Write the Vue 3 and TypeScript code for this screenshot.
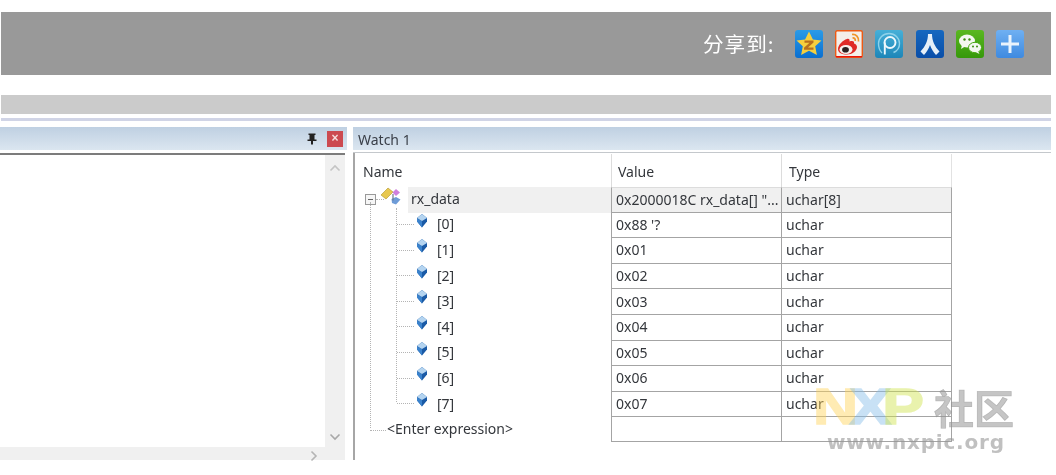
<script setup lang="ts">
interface Row { name: string; value: string; type: string }
const rows: Row[] = [
  { name: '[0]', value: "0x88 '?", type: 'uchar' },
  { name: '[1]', value: '0x01', type: 'uchar' },
  { name: '[2]', value: '0x02', type: 'uchar' },
  { name: '[3]', value: '0x03', type: 'uchar' },
  { name: '[4]', value: '0x04', type: 'uchar' },
  { name: '[5]', value: '0x05', type: 'uchar' },
  { name: '[6]', value: '0x06', type: 'uchar' },
  { name: '[7]', value: '0x07', type: 'uchar' },
]
</script>

<template>
  <div class="page">
    <header class="share">
      <span class="share-label">分享到:</span>
      <div class="share-icons">
        <svg class="ico" viewBox="0 0 28 28">
          <defs><linearGradient id="qz" x1="0" y1="0" x2="0" y2="1"><stop offset="0" stop-color="#2a9be8"/><stop offset="1" stop-color="#0a6fd0"/></linearGradient></defs>
          <rect width="28" height="28" rx="3" fill="url(#qz)"/>
          <path d="M14 1.500l3.900 7.900 8.600 1.100-6.300 5.800 1.700 8.700-7.900-4.300-7.900 4.300 1.700-8.700-6.300-5.800 8.600-1.100z" fill="#f6cf3e"/>
          <path d="M9.500 10.500h9v2l-5.500 5h5.500v2.200h-9.500v-2l5.500-5h-5z" fill="#b8701e"/>
        </svg>
        <svg class="ico" viewBox="0 0 28 28">
          <rect x="0.700" y="0.700" width="26.600" height="26.600" rx="1.500" fill="#f4efe9" stroke="#ee5a14" stroke-width="1.400"/>
          <path d="M1 27.300v-1.300h26v1.300z" fill="#e8140c"/>
          <path d="M3 19c0-4 5-9 9-10 2-.5 3 .5 2.500 2.500 3-1 5-.5 4.500 2 2 .5 3 2 3 3.500 0 4-5 7.500-10 7.500S3 23 3 19z" fill="#df2a26"/>
          <ellipse cx="11" cy="19.500" rx="6.500" ry="4.500" fill="#f6f0ec"/>
          <ellipse cx="10.500" cy="19.800" rx="3.400" ry="2.800" fill="#2a2020"/>
          <path d="M17 4.500c4-.5 7 2.500 6.500 7M17.500 8c2-.3 3 1 2.800 3" fill="none" stroke="#f0952a" stroke-width="1.700"/>
        </svg>
        <svg class="ico" viewBox="0 0 28 28">
          <defs><linearGradient id="pp" x1="0" y1="0" x2="0" y2="1"><stop offset="0" stop-color="#46b0d8"/><stop offset="1" stop-color="#1d86b8"/></linearGradient></defs>
          <rect width="28" height="28" rx="3" fill="url(#pp)"/>
          <path d="M7 23C4.500 20.500 3.500 17 3.500 13.500 3.500 8 8 3.500 14 3.500S24.500 8 24.500 13.500c0 4-2.500 7.500-6 9" fill="none" stroke="#8fd2ea" stroke-width="1.400"/>
          <circle cx="15" cy="12.500" r="5.500" fill="none" stroke="#eef8fc" stroke-width="1.900"/>
          <path d="M9.800 12.500v12" stroke="#eef8fc" stroke-width="1.900"/>
        </svg>
        <svg class="ico" viewBox="0 0 28 28">
          <defs><linearGradient id="rr" x1="0" y1="0" x2="0" y2="1"><stop offset="0" stop-color="#1668c0"/><stop offset="1" stop-color="#0a4ea8"/></linearGradient></defs>
          <rect width="28" height="28" rx="3" fill="url(#rr)"/>
          <path d="M12 4h4c0 7 2.800 12.500 7.500 17.500l-3.500 3.500c-2.700-2.700-4.700-6.500-6-10-1.300 3.500-3.300 7.300-6 10l-3.500-3.500C9.200 16.500 12 11 12 4z" fill="#e6eff8"/>
        </svg>
        <svg class="ico" viewBox="0 0 28 28">
          <defs><linearGradient id="wx" x1="0" y1="0" x2="0" y2="1"><stop offset="0" stop-color="#5ab820"/><stop offset="1" stop-color="#36980a"/></linearGradient></defs>
          <rect width="28" height="28" rx="3" fill="url(#wx)"/>
          <ellipse cx="11" cy="11" rx="8" ry="6.500" fill="#f4f8f0"/>
          <path d="M6 15l-1 4 4-2.500z" fill="#f4f8f0"/>
          <ellipse cx="19" cy="17.500" rx="6.500" ry="5.200" fill="#f4f8f0" stroke="#46a810" stroke-width="1"/>
          <path d="M22 21l1.500 3-4-2z" fill="#f4f8f0"/>
          <circle cx="8.500" cy="9.500" r="1.200" fill="#3d8c12"/><circle cx="13.500" cy="9.500" r="1.200" fill="#3d8c12"/>
          <circle cx="17" cy="16.500" r="1" fill="#3d8c12"/><circle cx="21" cy="16.500" r="1" fill="#3d8c12"/>
        </svg>
        <svg class="ico" viewBox="0 0 28 28">
          <defs><linearGradient id="pl" x1="0" y1="0" x2="0" y2="1"><stop offset="0" stop-color="#6fb0f2"/><stop offset="1" stop-color="#3f8ae0"/></linearGradient></defs>
          <rect width="28" height="28" rx="3" fill="url(#pl)"/>
          <path d="M12.500 5h3v7.500H23v3h-7.500V23h-3v-7.500H5v-3h7.500z" fill="#eaf3fc"/>
        </svg>
      </div>
    </header>

    <div class="toolbar"></div>
    <div class="rule"></div>

    <main class="panels">
      <section class="left">
        <div class="caption left-caption">
          <svg class="pin" viewBox="0 0 10 12"><path d="M1.500 0.500h7v1.500H7.500v4.500H9.500V8H6v3.500H4V8H.5V6.500h2V2H1.500z" fill="#222"/></svg>
          <span class="close">×</span>
        </div>
        <div class="left-line"></div>
        <div class="left-body">
          <div class="left-view"></div>
          <div class="vbar">
            <svg class="arrow" viewBox="0 0 12 8"><path d="M1.500 6.500L6 2l4.500 4.500" fill="none" stroke="#c4c4c4" stroke-width="1.600"/></svg>
            <svg class="arrow" viewBox="0 0 12 8"><path d="M1.500 1.500L6 6l4.500-4.500" fill="none" stroke="#a8a8a8" stroke-width="1.600"/></svg>
          </div>
        </div>
        <div class="hbar">
          <svg class="arrow-h" viewBox="0 0 8 12"><path d="M1.500 1.500L6 6l-4.500 4.500" fill="none" stroke="#b4b4b4" stroke-width="1.600"/></svg>
        </div>
      </section>

      <section class="right">
        <div class="caption right-caption">Watch 1</div>
        <div class="right-line"></div>
        <div class="watch">
          <div class="grid">
            <div class="head name-head">Name</div>
            <div class="head col">Value</div>
            <div class="head col">Type</div>

            <div class="name root-name">
              <span class="minus"></span>
              <span class="root-link"></span>
              <svg class="struct" viewBox="0 0 22 19">
                <path d="M1 8l7-7 5 4-7 7z" fill="#e8c850" stroke="#b09428" stroke-width=".6"/>
                <path d="M16 2l4 3.500-4 3.500-3.500-3.500z" fill="#cf80dc"/>
                <path d="M16 10l4.500 2.500-4.500 5-4-1.500-.5-4z" fill="#6e9cd8"/>
                <path d="M13 7v6.500" stroke="#6c7890" stroke-width="1.200"/>
              </svg>
              <span class="root-text">rx_data</span>
            </div>
            <div class="cell root-cell">0x2000018C rx_data[] "...</div>
            <div class="cell root-cell">uchar[8]</div>

            <template v-for="r in rows" :key="r.name">
              <div class="name child">
                <span class="branch"></span>
                <svg class="gem" viewBox="0 0 12 14">
                  <path d="M6 0l5 4v3.500L6 13.500 1 7.500V4z" fill="#1a5aa6"/>
                  <path d="M1 4.500L6 7v6.500L1 7.500z" fill="#3a82cc"/>
                  <path d="M6 0l5 4-5 3-5-3z" fill="#b4d4f0"/>
                </svg>
                <span class="child-text">{{ r.name }}</span>
              </div>
              <div class="cell">{{ r.value }}</div>
              <div class="cell">{{ r.type }}</div>
            </template>

            <div class="name enter">
              <span class="enter-link"></span>
              <span class="child-text">&lt;Enter expression&gt;</span>
            </div>
            <div class="cell"></div>
            <div class="cell"></div>
          </div>
          <span class="trunk"></span>
          <span class="subtrunk"></span>
        </div>
      </section>
    </main>

    <div class="mark">
      <div class="mark-top">
        <span class="nxp"><i class="n">N</i><i class="x">X</i><i class="p">P</i></span>
        <span class="cjk">社区</span>
      </div>
      <div class="mark-url">www.nxpic.org</div>
    </div>
  </div>
</template>

<style>
html, body { margin: 0; background: #fff; }
</style>

<style scoped>
.page {
  position: relative;
  width: 1056px;
  height: 475px;
  overflow: hidden;
  padding-top: 12px;
  box-sizing: border-box;
  background: #fff;
  font-family: "Noto Sans", "Open Sans", sans-serif;
  color: #333;
  filter: blur(0.3px);
}
.share {
  display: flex;
  align-items: center;
  justify-content: flex-end;
  height: 63px;
  margin: 0 5px 0 1px;
  padding-right: 27px;
  box-sizing: border-box;
  background: #999;
}
.share-label {
  color: #fff;
  font: 20px/1 "Noto Sans CJK SC", sans-serif;
  letter-spacing: 1px;
  margin-right: 21px;
  word-spacing: 0;
  transform: scaleX(1.03);
  transform-origin: right center;
}
.share-icons { display: flex; gap: 12.2px; }
.ico { width: 28px; height: 28px; display: block; }
.toolbar {
  height: 19px;
  margin: 20px 5px 0 1px;
  background: #cbcbcb;
}
.rule {
  height: 3px;
  margin: 4px 5px 0 1px;
  background: #d0d4e6;
}
.panels {
  display: flex;
  margin: 6px 5px 0 0;
  height: 333px;
}
.caption {
  height: 23px;
  background: linear-gradient(#bfd0e2, #dbe6f0);
  box-sizing: border-box;
}
.left {
  width: 347px;
  flex: none;
  display: flex;
  flex-direction: column;
}
.left-caption {
  display: flex;
  align-items: center;
  justify-content: flex-end;
  padding-right: 4px;
}
.pin { width: 10px; height: 12px; margin-right: 10px; }
.close {
  width: 16px;
  height: 16px;
  background: #cc4a50;
  color: #f6dede;
  font: bold 12px/15px "Liberation Sans", sans-serif;
  text-align: center;
}
.left-line {
  height: 2px;
  margin: 3px 2px 0 0;
  background: #7c7c7c;
}
.left-body { flex: 1; display: flex; min-height: 0; margin-right: 2px; }
.left-view { flex: 1; }
.vbar {
  width: 20px;
  background: #f0f0f0;
  display: flex;
  flex-direction: column;
  justify-content: space-between;
  align-items: center;
  padding: 9px 0 6px;
  box-sizing: border-box;
}
.arrow { width: 12px; height: 8px; display: block; }
.hbar {
  height: 13px;
  margin-right: 2px;
  background: #f0f0f0;
  display: flex;
  justify-content: flex-end;
  align-items: center;
  padding: 5px 27px 0 0;
  box-sizing: border-box;
}
.arrow-h { width: 8px; height: 12px; display: block; flex: none; }
.right {
  flex: 1;
  margin-left: 6px;
  display: flex;
  flex-direction: column;
}
.right-caption {
  padding-left: 5px;
  font-size: 14px;
  line-height: 25px;
  color: #3a3f48;
}
.right-line { height: 1px; margin-top: 2px; background: #c4c8cc; }
.watch {
  position: relative;
  flex: 1;
  border-left: 2px solid #a6a6a6;
  min-height: 0;
}
.grid {
  display: grid;
  grid-template-columns: 256px 170px 171px;
  grid-template-rows: 33px repeat(9, 25.600px) 25px;
  font-size: 14px;
  color: #34373c;
  width: 597px;
  margin-top: 1px;
}
.head {
  line-height: 36px;
  white-space: nowrap;
}
.name-head { padding-left: 8px; }
.col {
  padding-left: 6px;
  border-left: 1px solid #dcdcdc;
}
.col:nth-child(3) { border-right: 1px solid #e2e2e2; padding-left: 7px; }
.name {
  position: relative;
  display: flex;
  align-items: center;
  white-space: nowrap;
}
.root-name { padding-left: 10px; }
.minus {
  width: 9px;
  height: 9px;
  border: 1px solid #999;
  position: relative;
  flex: none;
  background: linear-gradient(#666, #666) center/5px 1px no-repeat #f6f6f6;
}
.root-link {
  width: 8px;
  border-top: 1px dotted #b4b4b4;
  flex: none;
}
.struct {
  position: absolute;
  left: 25px;
  top: 0;
  width: 22px;
  height: 19px;
}
.root-text {
  margin-left: 24px;
  align-self: stretch;
  flex: 1;
  padding-left: 3px;
  background: #f0f0f0;
  line-height: 24px;
}
.child { padding-left: 82px; }
.child-text { margin-bottom: 3px; }
.branch {
  position: absolute;
  left: 42px;
  top: 45%;
  width: 17px;
  border-top: 1px dotted #b4b4b4;
}
.gem {
  position: absolute;
  left: 61px;
  top: 1px;
  width: 12px;
  height: 14px;
}
.enter { padding-left: 32px; }
.enter-link {
  position: absolute;
  left: 15px;
  top: 50%;
  width: 16px;
  border-top: 1px dotted #b4b4b4;
}
.cell {
  display: flex;
  align-items: center;
  padding: 0 0 1px 4px;
  border-left: 1px solid #a4a4a4;
  border-bottom: 1px solid #a4a4a4;
  box-sizing: border-box;
  white-space: nowrap;
  overflow: hidden;
}
.cell:nth-child(3n+3) { border-right: 1px solid #a4a4a4; }
.root-cell { background: #f0f0f0; border-top: 1px solid #dcdcdc; }
.trunk {
  position: absolute;
  left: 15px;
  top: 49px;
  height: 226px;
  border-left: 1px dotted #b4b4b4;
}
.subtrunk {
  position: absolute;
  left: 41px;
  top: 55px;
  height: 194px;
  border-left: 1px dotted #b4b4b4;
}
.mark {
  position: absolute;
  left: 813px;
  top: 385px;
  width: 206px;
  pointer-events: none;
}
.mark-top { display: flex; align-items: center; height: 44px; }
.nxp {
  font: bold 50px/44px "Liberation Sans", sans-serif;
  letter-spacing: -3px;
  display: flex;
  width: 121px;
  flex: none;
  transform: scaleX(1.25);
  transform-origin: left center;
  -webkit-text-stroke: 1.500px;
}
.nxp i { font-style: normal; opacity: .45; }
.n { color: #ffd257; }
.x { color: #86bde8; margin-left: -4px; }
.p { color: #cfe34a; margin-left: -4px; }
.cjk {
  font: bold 40px/44px "Noto Sans CJK SC", sans-serif;
  color: rgba(150, 150, 150, .55);
  -webkit-text-stroke: .7px rgba(150, 150, 150, .55);
}
.mark-url {
  margin: 3px 0 0 14px;
  font: bold 20px/20px "DejaVu Sans", sans-serif;
  letter-spacing: .8px;
  color: rgba(150, 150, 150, .6);
  white-space: nowrap;
}
</style>
